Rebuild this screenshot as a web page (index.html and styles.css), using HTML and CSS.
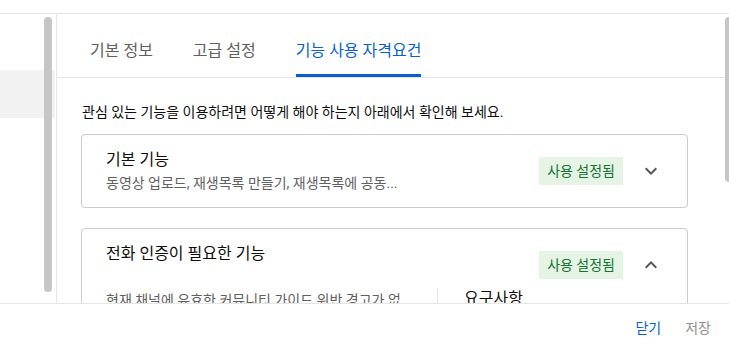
FILE: index.html
```
<!DOCTYPE html>
<html>
<head>
    <title>채널 설정</title>
    <link rel="stylesheet" href="styles.css">
</head>
<body>
    <div class="dialog">
        <div class="dialog-top"></div>
        <div class="dialog-body">
            <aside class="nav">
                <div class="nav-item active"></div>
                <div class="scrollbar nav-scroll"></div>
            </aside>
            <main class="content">
                <div class="tabs">
                    <div class="tab">기본 정보</div>
                    <div class="tab">고급 설정</div>
                    <div class="tab selected">기능 사용 자격요건</div>
                </div>
                <div class="panel">
                    <p class="intro">관심 있는 기능을 이용하려면 어떻게 해야 하는지 아래에서 확인해 보세요.</p>

                    <div class="card">
                        <div class="card-head">
                            <div class="card-text">
                                <div class="card-title">기본 기능</div>
                                <div class="card-sub">동영상 업로드, 재생목록 만들기, 재생목록에 공동...</div>
                            </div>
                            <span class="badge">사용 설정됨</span>
                            <svg class="chevron" viewBox="0 0 24 24"><path d="M7.41 8.59 12 13.17l4.59-4.58L18 10l-6 6-6-6z"/></svg>
                        </div>
                    </div>

                    <div class="card">
                        <div class="card-head">
                            <div class="card-text">
                                <div class="card-title">전화 인증이 필요한 기능</div>
                                <div class="card-sub"></div>
                            </div>
                            <span class="badge">사용 설정됨</span>
                            <svg class="chevron" viewBox="0 0 24 24"><path d="M12 8l-6 6 1.41 1.41L12 10.83l4.59 4.58L18 14z"/></svg>
                        </div>
                        <div class="card-detail">
                            <div class="detail-left">현재 채널에 유효한 커뮤니티 가이드 위반 경고가 없어야 합니다.</div>
                            <div class="detail-right">요구사항</div>
                        </div>
                    </div>
                </div>
                <div class="scrollbar main-scroll"></div>
            </main>
        </div>
        <footer class="dialog-footer">
            <button class="btn btn-close">닫기</button>
            <button class="btn btn-save">저장</button>
        </footer>
    </div>
</body>
</html>
```

FILE: styles.css
```
:root {
    --line: #e5e5e5;
    --text: #0d0d0d;
    --text-dim: #606060;
    --blue: #065fd4;
    --thumb: #c6c6c6;
}

body {
    margin: 0;
    font-family: Roboto, "Noto Sans CJK KR", sans-serif;
    color: var(--text);
    background: #fff;
}

.dialog {
    width: 729px;
    height: 350px;
    display: flex;
    flex-direction: column;
    overflow: hidden;
}

.dialog-top {
    height: 13px;
    border-bottom: 1px solid var(--line);
    flex-shrink: 0;
}

.dialog-body {
    flex: 1;
    display: flex;
    min-height: 0;
    overflow: hidden;
}

.nav {
    width: 56px;
    flex-shrink: 0;
    border-right: 1px solid var(--line);
    position: relative;
}

.nav-item {
    height: 48px;
    margin-top: 56px;
}

.nav-item.active {
    background: #f2f2f2;
    margin-right: 1px;
}

.scrollbar {
    position: absolute;
    top: 3px;
    width: 8px;
    border-radius: 4px;
    background: var(--thumb);
}

.nav-scroll {
    left: 44px;
    height: 275px;
}

.content {
    flex: 1;
    position: relative;
    overflow: hidden;
}

.main-scroll {
    left: 668px;
    height: 165px;
}

.tabs {
    display: flex;
    gap: 40px;
    height: 63px;
    padding-left: 33px;
    border-bottom: 1px solid var(--line);
}

.tab {
    font-size: 16px;
    color: var(--text-dim);
    display: flex;
    align-items: center;
    padding-top: 10px;
    border-bottom: 3px solid transparent;
}

.tab.selected {
    color: var(--blue);
    border-bottom-color: var(--blue);
}

.panel {
    padding: 24px 41px 0 24px;
}

.intro {
    margin: 0 0 12px 1px;
    font-size: 14px;
    line-height: 20px;
}

.card {
    border: 1px solid #cccccc;
    border-radius: 4px;
    margin-bottom: 20px;
}

.card-head {
    display: flex;
    align-items: center;
    padding: 14px 24px 14px;
}

.card-text {
    flex: 1;
}

.card-title {
    font-size: 16px;
    line-height: 22px;
}

.card-sub {
    margin-top: 2px;
    font-size: 14px;
    line-height: 20px;
    height: 20px;
    color: var(--text-dim);
}

.badge {
    font-size: 14px;
    line-height: 28px;
    padding: 0 8px;
    color: #137333;
    background: #e6f4e6;
}

.chevron {
    width: 24px;
    height: 24px;
    margin-left: 16px;
    fill: #555555;
}

.card-detail {
    display: grid;
    grid-template-columns: 355px 1fr;
    margin-top: -13px;
}

.detail-left {
    padding: 2px 24px 0;
    font-size: 14px;
    line-height: 20px;
    color: var(--text-dim);
}

.detail-right {
    border-left: 1px solid var(--line);
    padding-left: 26px;
    font-size: 16px;
    line-height: 22px;
}

.dialog-footer {
    flex-shrink: 0;
    height: 46px;
    border-top: 1px solid var(--line);
    display: flex;
    justify-content: flex-end;
    align-items: center;
    gap: 24px;
    padding-right: 18px;
    background: #fff;
}

.btn {
    border: none;
    background: none;
    padding: 0;
    font-family: inherit;
    font-size: 14px;
    cursor: pointer;
}

.btn-close {
    color: var(--blue);
}

.btn-save {
    color: #909090;
}
```
